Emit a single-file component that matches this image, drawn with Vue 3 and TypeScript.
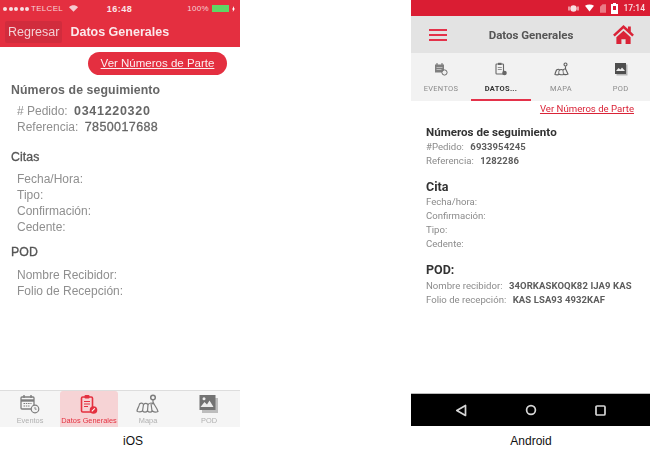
<script setup lang="ts">
interface Row { label: string; value?: string }
interface Section { title: string; rows: Row[] }

const iosSections: Section[] = [
  { title: 'Números de seguimiento', rows: [
    { label: '# Pedido:', value: '0341220320' },
    { label: 'Referencia:', value: '7850017688' },
  ] },
  { title: 'Citas', rows: [
    { label: 'Fecha/Hora:' }, { label: 'Tipo:' }, { label: 'Confirmación:' }, { label: 'Cedente:' },
  ] },
  { title: 'POD', rows: [
    { label: 'Nombre Recibidor:' }, { label: 'Folio de Recepción:' },
  ] },
]
const androidSections: Section[] = [
  { title: 'Números de seguimiento', rows: [
    { label: '#Pedido:', value: '6933954245' },
    { label: 'Referencia:', value: '1282286' },
  ] },
  { title: 'Cita', rows: [
    { label: 'Fecha/hora:' }, { label: 'Confirmación:' }, { label: 'Tipo:' }, { label: 'Cedente:' },
  ] },
  { title: 'POD:', rows: [
    { label: 'Nombre recibidor:', value: '34ORKASKOQK82 IJA9 KAS' },
    { label: 'Folio de recepción:', value: 'KAS LSA93 4932KAF' },
  ] },
]
</script>

<template>
  <div class="page">
    <figure class="col ios-col">
      <div class="phone ios">
        <div class="ios-status">
          <span class="carrier"><span class="dots"><i></i><i></i><i></i><i></i><i></i></span> TELCEL
            <svg class="wifi" width="9" height="7" viewBox="0 0 11 8"><path d="M5.500 8 0 2.400C3.200-.8 7.800-.8 11 2.400Z" fill="#f6c9ce"/></svg>
          </span>
          <span class="clock">16:48</span>
          <span class="batt">100%
            <span class="batt-box"></span>
            <svg width="3" height="6" viewBox="0 0 3 6"><path d="M2 0 0 3.400h1L.8 6 3 2.400H2Z" fill="#fff"/></svg>
          </span>
        </div>
        <div class="ios-nav">
          <span class="back">Regresar</span>
          <span class="ios-title">Datos Generales</span>
        </div>
        <div class="ios-link-row"><a class="ios-link">Ver Números de Parte</a></div>
        <div class="ios-body">
          <section v-for="s in iosSections" :key="s.title" class="ios-sec">
            <h3>{{ s.title }}</h3>
            <div v-for="r in s.rows" :key="r.label" class="ios-row">
              {{ r.label }} <b v-if="r.value">{{ r.value }}</b>
            </div>
          </section>
        </div>
        <nav class="ios-tabs">
          <div class="ios-tab">
            <svg width="20" height="20" viewBox="0 0 20 20" fill="none" stroke="#7d7d7d">
              <rect x="1" y="3" width="13" height="12" rx="1" stroke-width="1.300"/>
              <path d="M1 6.500h13" stroke-width="2.400"/>
              <path d="M4 1v3M11 1v3" stroke-width="1.400"/>
              <path d="M3.500 9.500h8M3.500 12h6" stroke-width="1.200" stroke-dasharray="1.500 .8"/>
              <circle cx="15" cy="15" r="3.800" fill="#f2f2f2" stroke-width="1.200"/>
              <path d="M15 13v2.200h1.600" stroke-width=".9"/>
            </svg>
            <span>Eventos</span>
          </div>
          <div class="ios-tab active">
            <svg width="20" height="21" viewBox="0 0 20 21" fill="none" stroke="#e4303f">
              <rect x="2.500" y="3" width="11" height="15" rx="1.300" stroke-width="1.600"/>
              <rect x="5.500" y="1" width="5" height="3.400" rx="1" fill="#e4303f" stroke="none"/>
              <path d="M5 7.500h6M5 10h6M5 12.500h4" stroke-width="1"/>
              <circle cx="14.500" cy="16" r="3.800" fill="#e4303f" stroke="none"/>
              <path d="m12.800 17.400 3-3" stroke="#fff" stroke-width="1.100"/>
            </svg>
            <span>Datos Generales</span>
          </div>
          <div class="ios-tab">
            <svg width="24" height="20" viewBox="0 0 24 20" fill="none" stroke="#7d7d7d" stroke-width="1.200">
              <path d="M1 17c0-2 2-4 2.500-7 1.500-1.500 3-1 4 .5 1.500-1.500 3-1.500 4.500 0 1-1 2-1.500 3-1.500 1 0 1.500 1 2.500 0 1 2.500 4 5.500 4.500 8.500-2 1-4 .8-5.500-.5-1.500 1.500-3.500 1.500-5 0-1.500 1.500-3.500 1.500-5 0-1.500 1-3.500 1-5 .5Z"/>
              <path d="M7.500 10.500 6.500 17M12 10.500 11.500 17M15 9.500l1 7.500"/>
              <circle cx="17" cy="3.500" r="2.300" stroke-width="1.500"/>
              <path d="M17 6v4.500" stroke-width="1.200"/>
            </svg>
            <span>Mapa</span>
          </div>
          <div class="ios-tab">
            <svg width="22" height="20" viewBox="0 0 22 20">
              <rect x="4" y="4" width="16" height="15" fill="#bdbdbd"/>
              <rect x="1.500" y="1" width="16" height="15" fill="#727272"/>
              <path d="m2.500 13 4-5 2.500 2.500 2.500-4 4 6.500Z" fill="#ececec"/>
              <circle cx="6" cy="4.800" r="1.500" fill="#ececec"/>
            </svg>
            <span>POD</span>
          </div>
        </nav>
      </div>
      <figcaption class="ios-cap">iOS</figcaption>
    </figure>

    <figure class="col android-col">
      <div class="phone android">
        <div class="a-status">
          <svg width="11" height="11" viewBox="0 0 11 11" fill="none" stroke="#f8dfe2"><circle cx="5.500" cy="5.500" r="3.200" fill="#f8dfe2" stroke="none"/><path d="M1 3.500v4M10 3.500v4" stroke-width="1.200"/></svg>
          <svg width="9" height="8" viewBox="0 0 10 8" fill="#fff"><path d="M5 8 0 1.500C3-.5 7-.5 10 1.500Z"/></svg>
          <svg width="6" height="9" viewBox="0 0 7 10"><path d="M0 10V3l3-3h4v10Z" fill="#ea7b86"/></svg>
          <svg width="7" height="11" viewBox="0 0 7 11"><path d="M2 0h3v1h2v10H0V1h2Z" fill="#fff"/><rect x="2" y="3" width="3" height="4" fill="#d91c33"/></svg>
          <span class="a-clock">17:14</span>
        </div>
        <div class="a-bar">
          <div class="burger"><i></i><i></i><i></i></div>
          <span class="a-title">Datos Generales</span>
          <svg class="home" width="21" height="19" viewBox="0 0 22 20" fill="#da2337">
            <path d="M11 0 0 10.200l1.800 1.800L11 3.800l9.200 8.200L22 10.200 18.700 7V1.500h-3v2.700Z"/>
            <path d="M11 6 3.500 12.800V20h5.300v-5h4.400v5h5.300v-7.200Z"/>
          </svg>
        </div>
        <div class="a-tabs">
          <div class="a-tab">
            <svg width="14" height="14" viewBox="0 0 14 14" fill="none" stroke="#6b6b6b">
              <rect x="1" y="2.500" width="9" height="8" fill="#7f7f7f" stroke="none"/>
              <path d="M2.500 5.500h6M2.500 7.500h5" stroke="#d8d8d8" stroke-width=".7"/>
              <path d="M3 1v2M8 1v2" stroke-width="1"/>
              <circle cx="10.500" cy="10.500" r="2.600" fill="#efefef" stroke-width="1"/>
            </svg>
            <span>EVENTOS</span>
          </div>
          <div class="a-tab current">
            <svg width="14" height="14" viewBox="0 0 14 14" fill="none" stroke="#666">
              <rect x="2" y="2" width="7.500" height="10" rx=".8" stroke-width="1.100"/>
              <rect x="4" y=".8" width="3.500" height="2.200" fill="#666" stroke="none"/>
              <path d="M3.800 5.500h4M3.800 7.500h4" stroke-width=".7"/>
              <circle cx="10.500" cy="11" r="2.300" fill="#666" stroke="none"/>
            </svg>
            <span>DATOS...</span>
          </div>
          <div class="a-tab">
            <svg width="15" height="14" viewBox="0 0 15 14" fill="none" stroke="#5f5f5f" stroke-width="1.100">
              <path d="M1 12.500c0-1.500 1-3 1.500-4.500 1.500-1 2.500-1 3 .2 1-1 2.500-1 3.500 0 .8-1 1.500-1.500 2.500-1.500l2.500 5.300c-1.500.8-3 .8-4 .2-1.500.8-3 .8-4.500 0-1.300.8-3 .8-4.500.3Z"/>
              <path d="M5 8.500 4.500 12.500M9 8.500l.5 4" stroke-width=".8"/>
              <circle cx="11.500" cy="2.500" r="1.500"/>
              <path d="M11.500 4.200v3"/>
            </svg>
            <span>MAPA</span>
          </div>
          <div class="a-tab">
            <svg width="14" height="14" viewBox="0 0 14 14">
              <rect x="2.500" y="2.500" width="11" height="11" fill="#b5b5b5"/>
              <rect x="1" y="1" width="11" height="11" fill="#4e4e4e"/>
              <path d="m2 9 2.500-3 2 1.500L8 5.500 11 9Z" fill="#ececec"/>
            </svg>
            <span>POD</span>
          </div>
        </div>
        <div class="a-link-row"><a class="a-link">Ver Números de Parte</a></div>
        <div class="a-body">
          <section v-for="s in androidSections" :key="s.title" class="a-sec">
            <h3>{{ s.title }}</h3>
            <div v-for="r in s.rows" :key="r.label" class="a-row">
              {{ r.label }} <b v-if="r.value">{{ r.value }}</b>
            </div>
          </section>
        </div>
        <div class="softkeys">
          <svg width="12" height="13" viewBox="0 0 12 13" fill="none" stroke="#d6d6d6" stroke-width="1.700"><path d="M10.500 1.500v10L1.800 6.500Z" stroke-linejoin="round"/></svg>
          <svg width="12" height="12" viewBox="0 0 12 12" fill="none" stroke="#d6d6d6" stroke-width="1.700"><circle cx="6" cy="6" r="4.400"/></svg>
          <svg width="11" height="11" viewBox="0 0 11 11" fill="none" stroke="#d6d6d6" stroke-width="1.700"><rect x="1" y="1" width="9" height="9" rx="1"/></svg>
        </div>
      </div>
      <figcaption class="a-cap">Android</figcaption>
    </figure>
  </div>
</template>

<style>
html, body { margin: 0; background: #fff; }
</style>

<style scoped>
.page {
  width: 650px;
  height: 450px;
  display: flex;
  justify-content: space-between;
  overflow: hidden;
  font-family: "Liberation Sans", Arial, sans-serif;
}
.col { margin: 0; display: flex; flex-direction: column; }
.ios-col { width: 240px; }
.android-col { width: 239px; }
.phone { display: flex; flex-direction: column; }
.ios { height: 427px; filter: blur(.35px); }
.android { height: 426px; background: #fff; }
figcaption { text-align: center; font-size: 12px; color: #111; line-height: 14px; }
.ios-cap { margin-top: 7px; margin-left: 26px; }
.a-cap { margin-top: 8px; margin-left: 1px; }

/* iOS */
.ios-status {
  height: 17px;
  background: #e42f40;
  display: grid;
  grid-template-columns: 1fr auto 1fr;
  align-items: center;
  padding: 0 5px 0 3px;
  color: #f7d3d7;
  font-size: 8px;
  letter-spacing: .3px;
}
.carrier { display: flex; align-items: center; gap: 2px; white-space: nowrap; }
.dots { display: flex; gap: 1.500px; }
.dots i { display: block; width: 4px; height: 4px; border-radius: 50%; background: #f7e0e2; }
.wifi { margin-left: 4px; }
.clock { font-weight: bold; font-size: 9px; color: #fbe6e8; letter-spacing: .5px; margin-left: 1px; }
.batt { justify-self: end; display: flex; align-items: center; gap: 3px; }
.batt-box { width: 17px; height: 7px; background: #5fd664; display: block; }
.ios-nav {
  height: 31px;
  background: #e42f40;
  display: flex;
  align-items: center;
  padding: 0 5px;
  color: #fbe9eb;
  box-sizing: border-box;
  margin-top: -1px;
}
.back {
  background: #d12c3d;
  border-radius: 2px;
  padding: 4px 3px;
  font-size: 12.500px;
  line-height: 14px;
  color: #f3d0d4;
  height: 22px;
  box-sizing: border-box;
}
.ios-title { font-size: 12.500px; font-weight: bold; margin-left: 8px; }
.ios-link-row { display: flex; justify-content: flex-end; padding: 5px 13px 0 0; }
.ios-link {
  display: block;
  width: 139px;
  height: 23px;
  line-height: 22px;
  text-align: center;
  background: #e42f40;
  border-radius: 12px;
  color: #fbeef0;
  font-size: 11.500px;
  text-decoration: underline;
}
.ios-body { flex: 1; padding: 7px 0 0 11px; }
.ios-sec { margin-bottom: 14px; }
.ios-sec:nth-child(2) { margin-bottom: 9px; }
.ios-sec h3 {
  margin: 0 0 5px;
  font-size: 12.300px;
  line-height: 16px;
  font-weight: bold;
  color: #666;
  letter-spacing: .1px;
}
.ios-sec:nth-child(n+2) h3 { margin-bottom: 6px; font-weight: normal; color: #555; -webkit-text-stroke: .3px #555; }
.ios-sec:nth-child(3) h3 { margin-bottom: 7px; }
.ios-row {
  padding-left: 6px;
  font-size: 12px;
  line-height: 16px;
  color: #8f8f8f;
}
.ios-row b { font-size: 12.500px; color: #666; margin-left: 3px; letter-spacing: .7px; }
.ios-row + .ios-row b { letter-spacing: .4px; font-weight: normal; -webkit-text-stroke: .3px #666; }
.ios-tabs {
  height: 37px;
  border-top: 1px solid #ddd;
  background: #f5f5f5;
  display: grid;
  grid-template-columns: 60px 58px 60px 62px;
  box-sizing: border-box;
}
.ios-tab {
  display: flex;
  flex-direction: column;
  align-items: center;
  padding-top: 3px;
  gap: 3px;
  font-size: 7.400px;
  line-height: 8px;
  color: #b0b0b0;
  white-space: nowrap;
}
.ios-tab svg { display: block; flex: none; }
.ios-tab.active { background: #f6d3d5; color: #e4303f; border-radius: 3px 3px 0 0; gap: 2px; }

/* Android */
.a-status {
  height: 16px;
  background: #da1d33;
  display: flex;
  justify-content: flex-end;
  align-items: center;
  gap: 5px;
  padding-right: 5px;
  filter: blur(.3px);
}
.a-status svg:nth-child(2), .a-status svg:nth-child(3) { margin-left: 1px; }
.a-clock { color: #f8dfe2; font-family: Roboto, sans-serif; font-size: 8.500px; font-weight: 500; }
.a-bar {
  height: 37px;
  background: #e3e3e3;
  display: flex;
  align-items: center;
  padding: 0 16px 0 18px;
  justify-content: space-between;
  filter: blur(.3px);
}
.burger { width: 18px; display: flex; flex-direction: column; gap: 3px; }
.burger i { display: block; height: 2px; background: #e4324a; }
.a-title { font-family: Roboto, sans-serif; font-size: 11.500px; font-weight: 700; color: #555; margin-left: 2px; }
.home { display: block; }
.a-tabs {
  height: 48px;
  background: #f2f2f2;
  display: grid;
  grid-template-columns: 60px 60px 60px 59px;
  flex: none;
  filter: blur(.3px);
}
.a-tab {
  display: flex;
  flex-direction: column;
  align-items: center;
  padding-top: 9px;
  gap: 9px;
  font-family: Roboto, sans-serif;
  font-size: 7.500px;
  line-height: 8px;
  color: #8a8a8a;
  letter-spacing: .3px;
  height: 48px;
  box-sizing: border-box;
}
.a-tab svg { display: block; flex: none; }
.a-tab.current { color: #333; font-weight: 700; box-shadow: inset 0 -2px 0 #e4324a; }
.a-link-row { display: flex; justify-content: flex-end; padding: 1px 16px 0 0; height: 14px; filter: blur(.3px); }
.a-link { color: #da2337; font-family: Roboto, sans-serif; font-size: 9.600px; line-height: 13px; text-decoration: underline; white-space: nowrap; }
.a-body { flex: 1; padding: 9px 0 0 15px; font-family: Roboto, sans-serif; filter: blur(.3px); }
.a-sec { margin-bottom: 11px; }
.a-sec h3 {
  margin: 0;
  font-size: 11.600px;
  line-height: 15px;
  font-weight: 700;
  color: #333;
}
.a-sec:nth-child(n+2) h3 { font-size: 12.500px; line-height: 16px; }
.a-sec:nth-child(3) h3 { margin-bottom: 1px; }
.a-row {
  font-size: 9.600px;
  line-height: 14px;
  color: #8b8b8b;
  white-space: nowrap;
}
.a-row b { color: #5d5d5d; font-size: 9.500px; font-weight: 700; margin-left: 4px; letter-spacing: .1px; }
.softkeys {
  height: 32px;
  background: #000;
  border-top: 1px solid #bbb;
  display: grid;
  grid-template-columns: repeat(3, 70px);
  justify-content: center;
  justify-items: center;
  align-items: center;
  flex: none;
}
</style>
